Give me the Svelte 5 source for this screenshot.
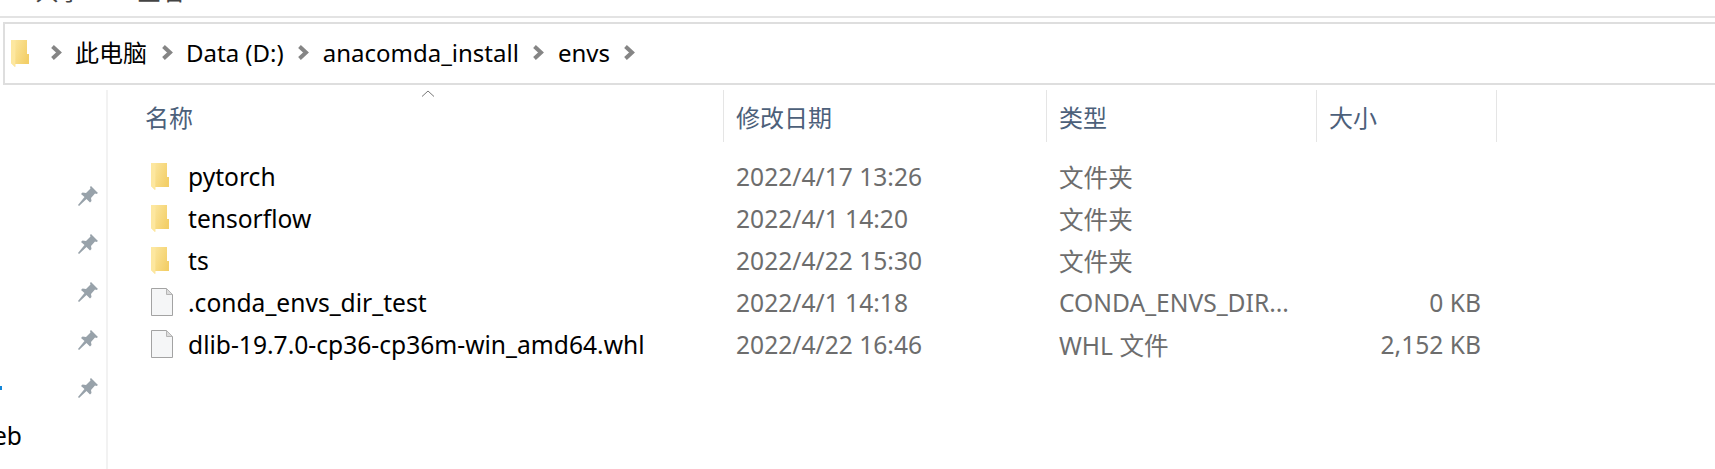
<script>
  const crumbs = ['此电脑', 'Data (D:)', 'anacomda_install', 'envs'];
  const pins = [0, 1, 2, 3, 4];
  const rows = [
    { kind: 'folder', name: 'pytorch', date: '2022/4/17 13:26', type: '文件夹', size: '' },
    { kind: 'folder', name: 'tensorflow', date: '2022/4/1 14:20', type: '文件夹', size: '' },
    { kind: 'folder', name: 'ts', date: '2022/4/22 15:30', type: '文件夹', size: '' },
    { kind: 'file', name: '.conda_envs_dir_test', date: '2022/4/1 14:18', type: 'CONDA_ENVS_DIR...', size: '0 KB' },
    { kind: 'file', name: 'dlib-19.7.0-cp36-cp36m-win_amd64.whl', date: '2022/4/22 16:46', type: 'WHL 文件', size: '2,152 KB' }
  ];
</script>

{#snippet folder()}
  <svg class="folder" width="18" height="27" viewBox="0 0 18 27">
    <path d="M0 0H16V14L18 14V24H4V27L0 23Z" fill="url(#fg)" />
    <path d="M0 0L4.5 3V27L0 23Z" fill="#fde79f" />
    <path d="M4.5 0H16V14L18 14V24H4.5Z" fill="url(#fh)" />
  </svg>
{/snippet}

{#snippet chevron(cls)}
  <svg class={cls} width="12" height="15" viewBox="0 0 12 15"><path d="M2.5 1.5L9 7.5L2.5 13.5" /></svg>
{/snippet}

<div class="page">
  <svg class="defs" width="0" height="0">
    <defs>
      <linearGradient id="fg" x1="0" x2="1" y1="0" y2="1"><stop offset="0" stop-color="#fde9a5" /><stop offset="1" stop-color="#f5d470" /></linearGradient>
      <linearGradient id="fh" x1="0" x2="1" y1="0" y2="0.6"><stop offset="0" stop-color="#fbe49a" /><stop offset="1" stop-color="#f3cf68" /></linearGradient>
    </defs>
  </svg>

  <div class="tabs"><span class="share">共享</span><span class="view">查看</span></div>

  <div class="address">
    {@render folder()}
    {@render chevron('chev first')}
    {#each crumbs as c}
      <span class="crumb">{c}</span>
      {@render chevron('chev')}
    {/each}
  </div>

  <div class="body">
    <aside class="side">
      {#each pins as p}
        <div class="pinrow" class:dot={p === 4}>
          <svg width="22" height="22" viewBox="0 0 22 22"><path d="M14 1L21 8L19.5 9L18 8.5L14 13L14.5 16L13 17.5L9.5 14L2 21L1 20L7.5 12L4 9L5.5 7.5L9 8L13.5 3.5L13 2Z" /></svg>
        </div>
      {/each}
      <div class="eb"><span>eb</span></div>
    </aside>

    <main class="list">
      <div class="head grid">
        <div class="hc first-h">名称<svg class="sort" width="14" height="7" viewBox="0 0 14 7"><path d="M1 6.5L7 1L13 6.5" /></svg></div>
        <div class="hc">修改日期</div>
        <div class="hc">类型</div>
        <div class="hc">大小</div>
      </div>
      <div class="rows">
        {#each rows as r}
          <div class="row grid">
            <div class="name">
              <span class="ic">
                {#if r.kind === 'folder'}
                  {@render folder()}
                {:else}
                  <svg width="22" height="28" viewBox="0 0 22 28"><path d="M.5.5H15.5L21.5 6.5V27.5H.5Z" fill="#f5f6f7" stroke="#a3a3a3" /><path d="M15.5.5V6.5H21.5Z" fill="#dcdcdc" stroke="#b5b5b5" /></svg>
                {/if}
              </span>
              {r.name}
            </div>
            <div class="meta">{r.date}</div>
            <div class="meta">{r.type}</div>
            <div class="meta size">{r.size}</div>
          </div>
        {/each}
      </div>
    </main>
  </div>
</div>

<style>
  :global(body) { margin: 0; background: #fff; }
  .page {
    width: 1715px; height: 469px; overflow: hidden; position: relative; background: #fff;
    font-family: "Noto Sans", "Noto Sans CJK SC", sans-serif; font-size: 24.6px; color: #000;
  }
  .defs { position: absolute; }
  .tabs {
    height: 16px; border-bottom: 2px solid #e3e3e3; overflow: hidden;
    display: flex; align-items: flex-start; color: #444; line-height: 24px; font-size: 24px;
  }
  .tabs span { display: block; transform: translateY(-21px); }
  .share { margin-left: 35px; }
  .view { margin-left: 54px; }
  .address {
    margin: 4px 0 0 3px; height: 59px; border: 2px solid #dedede; border-right: 0;
    display: flex; align-items: center; padding-left: 6px; font-size: 24px;
  }
  .chev { flex: none; margin: 0 13.5px 0 13.5px; position: relative; top: -1px; }
  .chev.first { margin-left: 21px; margin-right: 13px; }
  .chev path { fill: none; stroke: #858585; stroke-width: 4; }
  .crumb { line-height: 1; white-space: nowrap; position: relative; top: -1px; }
  .folder { display: block; flex: none; }
  .body { display: flex; height: 385px; }
  .side { width: 106px; margin-top: 5px; border-right: 2px solid #f2f2f2; padding-top: 82px; position: relative; }
  .pinrow { height: 47.9px; display: flex; align-items: center; padding-left: 77px; }
  .pinrow svg { fill: #98a2aa; }
  .dot::before {
    content: ""; position: absolute; left: 0; width: 2px; height: 4px; background: #1185d8;
  }
  .eb { height: 48px; display: flex; align-items: center; margin-left: -7px; font-size: 24.6px; }
  .grid { display: grid; grid-template-columns: 616px 323px 270px 180px; }
  .list { flex: 1; }
  .head { margin-top: 5px; height: 52px; color: #4c607a; }
  .hc {
    position: relative; border-right: 1px solid #e5e5e5; display: flex; align-items: center;
    padding-left: 12px; font-size: 24px;
  }
  .first-h { padding-left: 37px; }
  .sort { position: absolute; left: 313px; top: 0; }
  .sort path { fill: none; stroke: #777; stroke-width: 1; }
  .rows { padding-top: 13px; }
  .row { height: 42px; align-items: center; white-space: nowrap; }
  .name { display: flex; align-items: center; padding-left: 43px; }
  .ic { width: 37px; flex: none; display: flex; }
  .meta { padding-left: 12px; color: #6d6d6d; }
  .size { text-align: right; padding: 0 16px 0 0; }
</style>
